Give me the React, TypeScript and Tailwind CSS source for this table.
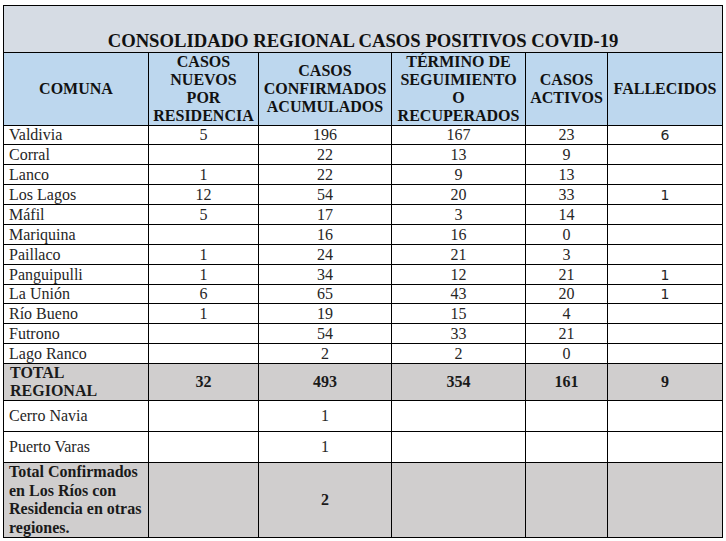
import React from "react";

type Row = { name: string; h: string; v: string[] };

const rows: Row[] = [
  { name: "Valdivia", h: "h-[19px]", v: ["5", "196", "167", "23", "6"] },
  { name: "Corral", h: "h-[20px]", v: ["", "22", "13", "9", ""] },
  { name: "Lanco", h: "h-[20px]", v: ["1", "22", "9", "13", ""] },
  { name: "Los Lagos", h: "h-[20px]", v: ["12", "54", "20", "33", "1"] },
  { name: "Máfil", h: "h-[20px]", v: ["5", "17", "3", "14", ""] },
  { name: "Mariquina", h: "h-[20px]", v: ["", "16", "16", "0", ""] },
  { name: "Paillaco", h: "h-[20px]", v: ["1", "24", "21", "3", ""] },
  { name: "Panguipulli", h: "h-[20px]", v: ["1", "34", "12", "21", "1"] },
  { name: "La Unión", h: "h-[19px]", v: ["6", "65", "43", "20", "1"] },
  { name: "Río Bueno", h: "h-[20px]", v: ["1", "19", "15", "4", ""] },
  { name: "Futrono", h: "h-[20px]", v: ["", "54", "33", "21", ""] },
  { name: "Lago Ranco", h: "h-[20px]", v: ["", "2", "2", "0", ""] },
];

const td = "border border-black p-0 align-middle";

export default function App() {
  return (
    <div className="bg-white w-[726px] h-[541px] overflow-hidden pt-[5px] pl-[3px] font-['Liberation_Serif',serif] text-[#1a1a1a]">
      <table className="border-collapse table-fixed w-[719px]">
        <colgroup>
          <col className="w-[145px]" />
          <col className="w-[110px]" />
          <col className="w-[133px]" />
          <col className="w-[134px]" />
          <col className="w-[82px]" />
          <col className="w-[115px]" />
        </colgroup>
        <tbody>
          <tr className="h-[47px] bg-[#d6dce4]">
            <td colSpan={6} className="border border-black p-0 align-bottom text-center font-bold text-[18.67px] leading-[21px] pb-[1px] text-[#111]">
              CONSOLIDADO REGIONAL CASOS POSITIVOS COVID-19
            </td>
          </tr>
          <tr className="h-[73px] bg-[#bdd7ee] font-bold text-[16px] leading-[18px] text-center text-[#111]">
            <td className={td}>COMUNA</td>
            <td className={td}>
              CASOS
              <br />
              NUEVOS
              <br />
              POR
              <br />
              RESIDENCIA
            </td>
            <td className={td}>
              CASOS
              <br />
              CONFIRMADOS
              <br />
              ACUMULADOS
            </td>
            <td className={td}>
              TÉRMINO DE
              <br />
              SEGUIMIENTO
              <br />
              O
              <br />
              RECUPERADOS
            </td>
            <td className={td}>
              CASOS
              <br />
              ACTIVOS
            </td>
            <td className={td}>FALLECIDOS</td>
          </tr>
          {rows.map((r) => (
            <tr key={r.name} className={`${r.h} text-[16px] leading-[18px] text-[#262626]`}>
              <td className={`${td} pl-[5px] text-left`}>{r.name}</td>
              <td className={`${td} text-center`}>{r.v[0]}</td>
              <td className={`${td} text-center`}>{r.v[1]}</td>
              <td className={`${td} text-center`}>{r.v[2]}</td>
              <td className={`${td} text-center`}>{r.v[3]}</td>
              <td className={`${td} text-center font-['DejaVu_Sans',sans-serif] text-[14px]`}>{r.v[4]}</td>
            </tr>
          ))}
          <tr className="h-[37px] bg-[#d0cece] font-bold text-[16px] leading-[18px]">
            <td className={`${td} pl-[6px] text-left`}>
              TOTAL
              <br />
              REGIONAL
            </td>
            <td className={`${td} text-center`}>32</td>
            <td className={`${td} text-center`}>493</td>
            <td className={`${td} text-center`}>354</td>
            <td className={`${td} text-center`}>161</td>
            <td className={`${td} text-center`}>9</td>
          </tr>
          <tr className="h-[31px] text-[16px] leading-[18px] text-[#262626]">
            <td className={`${td} pl-[5px] text-left`}>Cerro Navia</td>
            <td className={td}></td>
            <td className={`${td} text-center`}>1</td>
            <td className={td}></td>
            <td className={td}></td>
            <td className={td}></td>
          </tr>
          <tr className="h-[31px] text-[16px] leading-[18px] text-[#262626]">
            <td className={`${td} pl-[5px] text-left`}>Puerto Varas</td>
            <td className={td}></td>
            <td className={`${td} text-center`}>1</td>
            <td className={td}></td>
            <td className={td}></td>
            <td className={td}></td>
          </tr>
          <tr className="h-[73px] bg-[#d0cece] font-bold text-[16px] leading-[18.5px]">
            <td className={`${td} pl-[5px] text-left`}>
              Total Confirmados
              <br />
              en Los Ríos con
              <br />
              Residencia en otras
              <br />
              regiones.
            </td>
            <td className={td}></td>
            <td className={`${td} text-center`}>2</td>
            <td className={td}></td>
            <td className={td}></td>
            <td className={td}></td>
          </tr>
        </tbody>
      </table>
    </div>
  );
}
